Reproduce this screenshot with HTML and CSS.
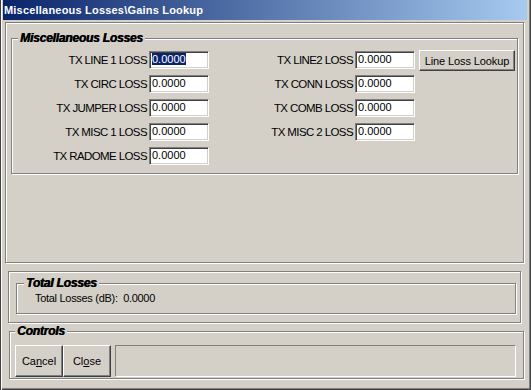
FILE: index.html
```html
<!DOCTYPE html>
<html lang="en">
<head>
  <meta charset="UTF-8" />
  <title>Miscellaneous Losses\Gains Lookup</title>
  <link rel="stylesheet" href="styles.css">
</head>
<body>
  <div class="window">
    <div class="titlebar">Miscellaneous Losses\Gains Lookup</div>

    <div class="panel top-panel">
      <div class="group misc">
        <span class="legend">Miscellaneous Losses</span>
        <div class="fields">
          <div class="field-grid left">
            <label>TX LINE 1 LOSS</label><div class="edit"><span class="sel">0.0000</span></div>
            <label>TX CIRC LOSS</label><div class="edit">0.0000</div>
            <label>TX JUMPER LOSS</label><div class="edit">0.0000</div>
            <label>TX MISC 1 LOSS</label><div class="edit">0.0000</div>
            <label>TX RADOME LOSS</label><div class="edit">0.0000</div>
          </div>
          <div class="field-grid right">
            <label>TX LINE2 LOSS</label><div class="edit">0.0000</div>
            <label>TX CONN LOSS</label><div class="edit">0.0000</div>
            <label>TX COMB LOSS</label><div class="edit">0.0000</div>
            <label>TX MISC 2 LOSS</label><div class="edit">0.0000</div>
          </div>
          <button class="btn lookup">Line Loss Lookup</button>
        </div>
      </div>
    </div>

    <div class="panel total-panel">
      <div class="group totals">
        <span class="legend">Total Losses</span>
        <div class="total-text">Total Losses (dB):&nbsp; 0.0000</div>
      </div>
    </div>

    <div class="group controls">
      <span class="legend">Controls</span>
      <button class="btn cmd">Ca<u>n</u>cel</button>
      <button class="btn cmd">Cl<u>o</u>se</button>
      <div class="status"></div>
    </div>
  </div>
</body>
</html>
```

FILE: styles.css
```css
body { margin: 0; background: #d4d0c8; font-family: "Liberation Sans", Arial, sans-serif; font-size: 11px; color: #000; }

.window {
  width: 531px; height: 390px; box-sizing: border-box;
  padding: 0 4px 4px 3px;
  background: #d4d0c8;
  box-shadow: inset 1px 0 0 #404040, inset 2px 0 0 #fff,
              inset -1px -1px 0 #404040, inset -2px -2px 0 #808080;
}
.titlebar {
  height: 20px; line-height: 20px; padding-left: 1px;
  background: linear-gradient(to right, #0a246a, #a6caf0);
  color: #fff; font-weight: bold; font-size: 11px; letter-spacing: 0.2px;
}

/* etched frames */
.panel, .group {
  position: relative;
  border: 1px solid #808080;
  box-shadow: inset 1px 1px 0 #fff, 1px 1px 0 #fff;
}
.legend {
  position: absolute; top: -8px;
  padding: 0 2px; background: #d4d0c8;
  font-size: 12px; line-height: 14px; font-weight: bold; font-style: italic;
  letter-spacing: -0.2px;
  text-shadow: 0.6px 0 0 #000;
}

.top-panel { margin: 2px 3px 0 2px; height: 239px; }
.misc { margin: 15px 5px 0 5px; padding: 12px 0 8px 0; }
.misc .legend { left: 6px; }

.fields { display: flex; align-items: flex-start; }
.field-grid { display: grid; grid-template-columns: 135px 60px; column-gap: 2px; row-gap: 6px; }
.field-grid.right { grid-template-columns: 144px 60px; }
.field-grid label { text-align: right; line-height: 18px; font-size: 11.5px; letter-spacing: -0.6px; white-space: nowrap; }

.edit {
  height: 18px; box-sizing: border-box; padding: 0 2px;
  background: #fff; line-height: 15px;
  border: 1px solid; border-color: #808080 #fff #fff #808080;
  box-shadow: inset 1px 1px 0 #404040, inset -1px -1px 0 #d4d0c8;
}
.sel { background: #0a246a; color: #fff; }

.btn {
  font-family: inherit; font-size: 11px; color: #000;
  background: #d4d0c8; padding: 0;
  border: 1px solid; border-color: #fff #404040 #404040 #fff;
  box-shadow: inset -1px -1px 0 #808080;
}
.lookup { width: 96px; height: 21px; margin: -1px 0 0 4px; letter-spacing: -0.1px; }

.total-panel { margin: 8px 6px 0 5px; height: 50px; }
.totals { margin: 11px 4px 0 7px; height: 29px; }
.totals .legend { left: 7px; }
.total-text { padding: 8px 0 0 18px; line-height: 13px; letter-spacing: -0.3px; }

.controls {
  margin: 8px 3px 0 6px; height: 48px; box-sizing: border-box;
  display: flex; align-items: flex-start; padding: 13px 7px 0 5px;
}
.controls .legend { left: 5px; }
.cmd { width: 48px; height: 32px; }
.status {
  flex: 1; height: 32px; box-sizing: border-box; margin-left: 4px;
  border: 1px solid; border-color: #808080 #fff #fff #808080;
}
```
